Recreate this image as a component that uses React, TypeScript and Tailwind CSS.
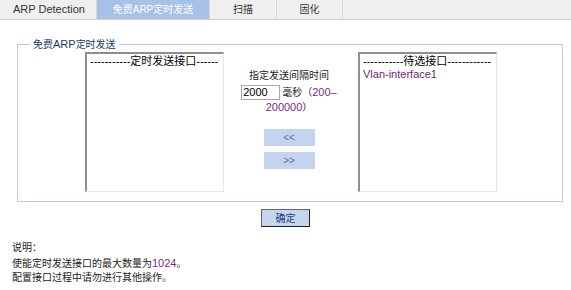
import React from 'react'

const tabs = [
  { label: 'ARP Detection', w: 'w-[97px]', latin: true },
  { label: '免费ARP定时发送', w: 'w-[113px]', active: true },
  { label: '扫描', w: 'w-[67px]' },
  { label: '固化', w: 'w-[66px]' },
]

// list box with inset border, like the old select multiple
function ListBox({ header, items }: { header: string; items: string[] }) {
  return (
    <div className="w-[139px] h-[140px] bg-white border-t-2 border-l-2 border-r border-b border-t-[#8e8e8e] border-l-[#8e8e8e] border-r-[#e6e6e6] border-b-[#e6e6e6] pl-[3px] pt-[1px] overflow-hidden">
      <div className="text-[11px] leading-[13px] text-black whitespace-nowrap">{header}</div>
      {items.map(it => (
        <div key={it} className="text-[11px] leading-[13px] text-[#6b2a7a] whitespace-nowrap">
          {it}
        </div>
      ))}
    </div>
  )
}

export default function App() {
  return (
    <div className="w-[571px] h-[290px] bg-white text-[#222] font-['Liberation_Sans','Noto_Sans_CJK_SC',sans-serif] overflow-hidden">
      {/* tab bar */}
      <div className="flex h-[20px] bg-[#efefef] border-b border-[#d2d2d2]">
        {tabs.map(t => (
          <div
            key={t.label}
            className={`${t.w} h-full flex items-center justify-center border-r border-[#d8d8d8] ${
              t.active ? 'bg-[#a8c1e6] text-white' : 'text-[#333]'
            } ${t.latin ? 'text-[11px] pl-[2px]' : 'text-[10px]'}`}
          >
            {t.label}
          </div>
        ))}
      </div>

      {/* fieldset */}
      <fieldset className="ml-[17px] mt-[16px] w-[546px] border border-[#bccbe0] pb-[9px]">
        <legend className="ml-[12px] px-[3px] h-[16px] leading-[16px] text-[10px] text-[#1b3a6b]">
          免费<span className="text-[11px]">ARP</span>定时发送
        </legend>
        <div className="flex pl-[67px]">
          <ListBox header="-----------定时发送接口------" items={[]} />

          <div className="w-[134px] flex flex-col items-center pt-[17px] pr-[4px] text-[10px]">
            <div className="leading-[14px]">指定发送间隔时间</div>
            <div className="mt-[2px] flex items-center h-[15px]">
              <input
                readOnly
                value="2000"
                className="w-[39px] h-[15px] border border-[#a8a8a8] px-[1px] text-[11px] text-black outline-none"
              />
              <span className="ml-[2px] leading-[14px]">
                毫秒（<span className="text-[11px] text-[#7a2d86]">200–</span>
              </span>
            </div>
            <div className="leading-[14px]">
              <span className="text-[11px] text-[#7a2d86]">200000</span>）
            </div>
            <div className="mt-[14px] w-[51px] h-[17px] bg-[#c4d4ee] text-[#5d6f9e] text-[10px] flex items-center justify-center">
              &lt;&lt;
            </div>
            <div className="mt-[6px] w-[51px] h-[17px] bg-[#c4d4ee] text-[#5d6f9e] text-[10px] flex items-center justify-center">
              &gt;&gt;
            </div>
          </div>

          <ListBox header="-----------待选接口------------" items={['Vlan-interface1']} />
        </div>
      </fieldset>

      <div className="flex justify-center mt-[7px]">
        <div className="w-[49px] h-[18px] border border-[#666] border-b-[#222] border-r-[#222] bg-[#c5d5ee] text-[10px] text-[#1e3a78] flex items-center justify-center">
          确定
        </div>
      </div>

      <div className="px-[12px] mt-[14px] text-[10px] leading-[14.5px] text-[#222]">
        <div>说明：</div>
        <div>
          使能定时发送接口的最大数量为<span className="text-[11px] text-[#7a2d86]">1024</span>。
        </div>
        <div>配置接口过程中请勿进行其他操作。</div>
      </div>
    </div>
  )
}
